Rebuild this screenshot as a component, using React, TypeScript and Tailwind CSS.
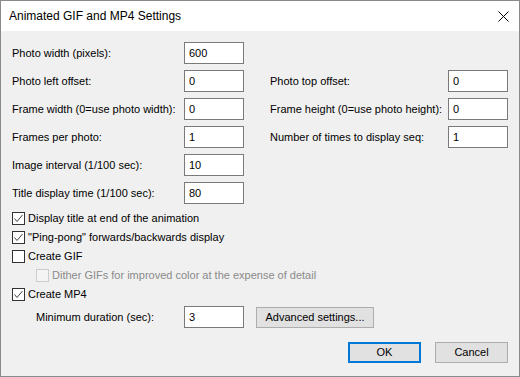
const font = { fontFamily: '"Liberation Sans", Arial, sans-serif' };

function Field({ value }: { value: string }) {
  return (
    <div className="flex h-[22px] w-[60px] shrink-0 items-center border border-[#7a7a7a] bg-white pl-[4px] text-[11px] text-black">
      {value}
    </div>
  );
}

function Row({ label, value }: { label: string; value: string }) {
  return (
    <div className="flex items-center">
      <span className="w-[172px] shrink-0 whitespace-nowrap">{label}</span>
      <Field value={value} />
    </div>
  );
}

function Check({ checked, disabled }: { checked?: boolean; disabled?: boolean }) {
  return (
    <svg width="13" height="13" viewBox="0 0 13 13" className="shrink-0">
      <rect
        x="0.5"
        y="0.5"
        width="12"
        height="12"
        fill={disabled ? "#f4f4f4" : "#ffffff"}
        stroke={disabled ? "#cccccc" : "#333333"}
      />
      {checked && (
        <polyline points="2.5,6.5 5,9.5 10.5,3" fill="none" stroke="#444444" strokeWidth="1" />
      )}
    </svg>
  );
}

function CheckRow({
  label,
  checked,
  disabled,
  indent,
}: {
  label: string;
  checked?: boolean;
  disabled?: boolean;
  indent?: boolean;
}) {
  return (
    <div className={`flex h-[19px] items-center gap-[3px] whitespace-nowrap ${indent ? "pl-[24px]" : ""}`}>
      <Check checked={checked} disabled={disabled} />
      <span className={disabled ? "text-[#8a8a8a]" : "text-black"}>{label}</span>
    </div>
  );
}

export default function App() {
  return (
    <div
      style={font}
      className="flex h-[377px] w-[520px] flex-col border border-[#8a8a8a] bg-[#f0f0f0] text-[11px] text-black"
    >
      <div className="flex h-[30px] shrink-0 items-center justify-between bg-white pl-[8px] pr-[10px]">
        <span className="text-[12px]">Animated GIF and MP4 Settings</span>
        <svg width="11" height="11" viewBox="0 0 11 11">
          <path d="M0.5 0.5 L10.5 10.5 M10.5 0.5 L0.5 10.5" stroke="#000" strokeWidth="1" />
        </svg>
      </div>

      <div className="flex flex-col pl-[11px] pr-[11px] pt-[11px]">
        <div className="flex flex-col gap-[6px]">
          <Row label="Photo width (pixels):" value="600" />
          {[
            ["Photo left offset:", "0", "Photo top offset:", "0"],
            ["Frame width (0=use photo width):", "0", "Frame height (0=use photo height):", "0"],
            ["Frames per photo:", "1", "Number of times to display seq:", "1"],
          ].map(([l1, v1, l2, v2]) => (
            <div key={l1} className="flex items-center">
              <Row label={l1} value={v1} />
              <span className="ml-[26px] w-[178px] shrink-0 whitespace-nowrap">{l2}</span>
              <Field value={v2} />
            </div>
          ))}
          <Row label="Image interval (1/100 sec):" value="10" />
          <Row label="Title display time (1/100 sec):" value="80" />
        </div>

        <div className="mt-[5px] flex flex-col">
          <CheckRow label="Display title at end of the animation" checked />
          <CheckRow label={'"Ping-pong" forwards/backwards display'} checked />
          <CheckRow label="Create GIF" />
          <CheckRow label="Dither GIFs for improved color at the expense of detail" disabled indent />
          <CheckRow label="Create MP4" checked />
        </div>

        <div className="mt-[2px] flex items-center">
          <span className="w-[172px] shrink-0 whitespace-nowrap pl-[24px]">Minimum duration (sec):</span>
          <Field value="3" />
          <button className="ml-[12px] h-[21px] w-[118px] border border-[#adadad] bg-[#e1e1e1] text-[11px]">
            Advanced settings...
          </button>
        </div>

        <div className="mt-[14px] flex justify-end gap-[14px]">
          <button className="h-[21px] w-[73px] border-2 border-[#0078d7] bg-[#e1e1e1] text-[11px]">
            OK
          </button>
          <button className="h-[21px] w-[73px] border border-[#adadad] bg-[#e1e1e1] text-[11px]">
            Cancel
          </button>
        </div>
      </div>
    </div>
  );
}
